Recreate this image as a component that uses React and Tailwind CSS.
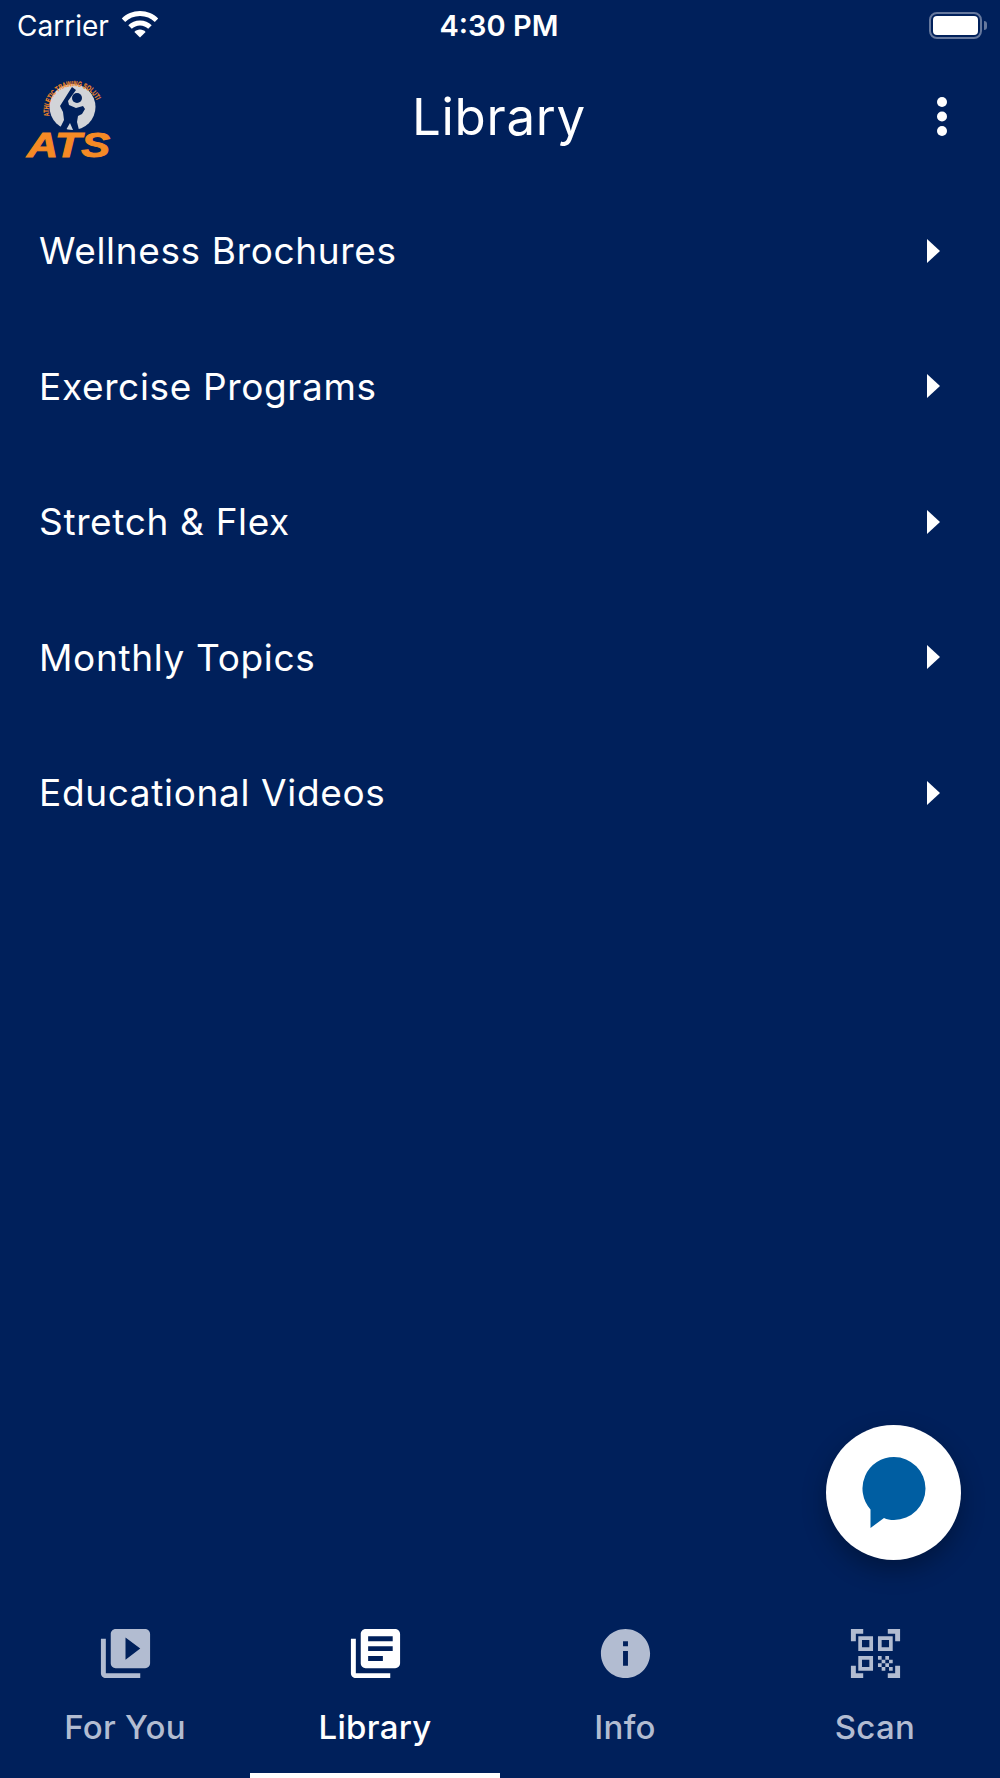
const MENU_ITEMS = ["Wellness Brochures", "Exercise Programs", "Stretch & Flex", "Monthly Topics", "Educational Videos"];

const TABS = [
  {
    label: "For You",
    d: "M4 6H2v14c0 1.1.9 2 2 2h14v-2H4V6zm16-4H8c-1.1 0-2 .9-2 2v12c0 1.1.9 2 2 2h12c1.1 0 2-.9 2-2V4c0-1.1-.9-2-2-2zm-8 12.5v-9l6 4.5-6 4.5z",
  },
  {
    label: "Library",
    active: true,
    d: "M4 6H2v14c0 1.1.9 2 2 2h14v-2H4V6zm16-4H8c-1.1 0-2 .9-2 2v12c0 1.1.9 2 2 2h12c1.1 0 2-.9 2-2V4c0-1.1-.9-2-2-2zm-1 9H9V9h10v2zm-4 4H9v-2h6v2zm4-8H9V5h10v2z",
  },
  {
    label: "Info",
    d: "M12 2C6.48 2 2 6.48 2 12s4.48 10 10 10 10-4.48 10-10S17.52 2 12 2zm1 15h-2v-6h2v6zm0-8h-2V7h2v2z",
  },
  {
    label: "Scan",
    d: "M9.5 6.5v3h-3v-3h3M11 5H5v6h6V5zm-1.5 9.5v3h-3v-3h3M11 13H5v6h6v-6zm6.5-6.5v3h-3v-3h3M19 5h-6v6h6V5zm-6 8h1.5v1.5H13V13zm1.5 1.5H16V16h-1.5v-1.5zM16 13h1.5v1.5H16V13zm-3 3h1.5v1.5H13V16zm1.5 1.5H16V19h-1.5v-1.5zM16 16h1.5v1.5H16V16zm1.5-1.5H19V16h-1.5v-1.5zm0 3H19V19h-1.5v-1.5zM22 7h-2V4h-3V2h5v5zm0 15v-5h-2v3h-3v2h5zM2 22h5v-2H4v-3H2v5zM2 2v5h2V4h3V2H2z",
  },
];

function WifiIcon() {
  return (
    <svg viewBox="0 0 38 28" className="w-[38px] h-[28px] ml-[12px] mb-[3px]" fill="#fff">
      <path d="M19 1C11.8 1 5.400 3.800 .8 8.400l3.400 3.600C8 8.200 13.200 6 19 6s11 2.200 14.800 6l3.400-3.600C32.600 3.800 26.200 1 19 1z" />
      <path d="M19 10.400c-4.600 0-8.700 1.800-11.700 4.800l3.500 3.600c2.100-2.100 5-3.400 8.200-3.400s6.100 1.300 8.200 3.400l3.500-3.600c-3-3-7.100-4.800-11.700-4.800z" />
      <path d="M19 19.600c-2.200 0-4.200.9-5.600 2.300l5.600 5.600 5.600-5.600c-1.400-1.400-3.400-2.300-5.600-2.300z" />
    </svg>
  );
}

function Battery() {
  return (
    <div className="flex items-center">
      <div className="w-[53px] h-[27px] rounded-[8px] border-[2.5px] border-[#66789d] p-[2px]">
        <div className="w-full h-full rounded-[4px] bg-white" />
      </div>
      <div className="w-[3px] h-[9px] ml-[2px] rounded-r-[3px] bg-[#66789d]" />
    </div>
  );
}

function Logo() {
  return (
    <svg viewBox="0 0 90 90" className="w-[90px] h-[90px] overflow-visible">
      <defs>
        <path id="ats-arc" d="M25.200 44 A 25 25 0 0 1 73 30" />
      </defs>
      <circle cx="48.500" cy="35" r="23" fill="#d2d4d8" />
      <circle cx="53" cy="26" r="5" fill="#00205b" />
      <path d="M48 15L52 18L44 29L45 33L52 36L59 34L61 37L58 42L54 44L53 50L55 58L49 58L46 51L42 58L35 58L40 48L39 40L36 34z" fill="#00205b" />
      <text fontFamily="Liberation Sans, sans-serif" fontWeight="700" fontSize="7.500" fill="#f58a25" stroke="#f58a25" strokeWidth="0.2">
        <textPath href="#ats-arc" textLength="83" lengthAdjust="spacingAndGlyphs">ATHLETIC TRAINING SOLUTIONS</textPath>
      </text>
      <text x="3" y="85" fontFamily="Liberation Sans, sans-serif" fontWeight="700" fontStyle="italic" fontSize="35" fill="#f58a25" stroke="#f58a25" strokeWidth="1" textLength="83" lengthAdjust="spacingAndGlyphs">
        ATS
      </text>
    </svg>
  );
}

function Caret() {
  return (
    <svg viewBox="0 0 13 24" className="w-[13px] h-[24px]" fill="#fff">
      <path d="M0 0l13 12L0 24z" />
    </svg>
  );
}

function ChatBubble() {
  return (
    <svg viewBox="0 0 64 72" className="w-[64px] h-[72px]" fill="#005ea2">
      <path d="M32 0a31.500 31.500 0 1 1 0 63c-4 0-7-.5-10-2L8.500 71V52.500A31.500 31.500 0 0 1 32 0z" />
    </svg>
  );
}

export default function App() {
  return (
    <div className="relative flex flex-col w-[1000px] h-[1778px] overflow-hidden bg-[#00205b] text-white font-['Inter',sans-serif]">
      {/* Status bar */}
      <div className="grid grid-cols-3 items-center h-[50px] pl-[17px] pr-[13px]">
        <div className="flex items-center">
          <span className="text-[28px] leading-none mt-[1px]">Carrier</span>
          <WifiIcon />
        </div>
        <span className="text-center pr-[6px] text-[29px] leading-none font-semibold mt-[1px]">4:30 PM</span>
        <div className="flex justify-end">
          <Battery />
        </div>
      </div>

      {/* Header */}
      <div className="grid grid-cols-[388px_auto_1fr] items-center h-[133px] pl-[24px] pr-[53px]">
        <Logo />
        <h1 className="text-[51px] leading-none font-normal tracking-[0.7px]">Library</h1>
        <svg viewBox="0 0 10 39" className="w-[10px] h-[39px] justify-self-end" fill="#fff">
          <circle cx="5" cy="5" r="5" />
          <circle cx="5" cy="19.500" r="5" />
          <circle cx="5" cy="34" r="5" />
        </svg>
      </div>

      {/* Menu */}
      <div className="flex flex-col flex-1">
        {MENU_ITEMS.map((item) => (
          <div key={item} className="flex items-center justify-between h-[135.5px] pl-[39px] pr-[60px]">
            <span className="text-[37px] leading-none tracking-[0.65px]">{item}</span>
            <Caret />
          </div>
        ))}
      </div>

      {/* Chat button */}
      <div className="absolute left-[826px] top-[1425px] flex items-center justify-center w-[135px] h-[135px] rounded-full bg-white shadow-[0_10px_24px_rgba(0,0,0,0.3)]">
        <ChatBubble />
      </div>

      {/* Tab bar */}
      <div className="grid grid-cols-4 h-[154px]">
        {TABS.map((tab) => (
          <div key={tab.label} className={`flex flex-col items-center ${tab.active ? "text-white" : "text-[#b2bcd1]"}`}>
            <svg viewBox="0 0 24 24" className="w-[59px] h-[59px]" fill="currentColor">
              <path d={tab.d} />
            </svg>
            <span className="mt-[28px] text-[33px] leading-none font-medium tracking-[0.3px]">{tab.label}</span>
            <div className={`mt-auto w-full h-[5px] ${tab.active ? "bg-white" : ""}`} />
          </div>
        ))}
      </div>
    </div>
  );
}
